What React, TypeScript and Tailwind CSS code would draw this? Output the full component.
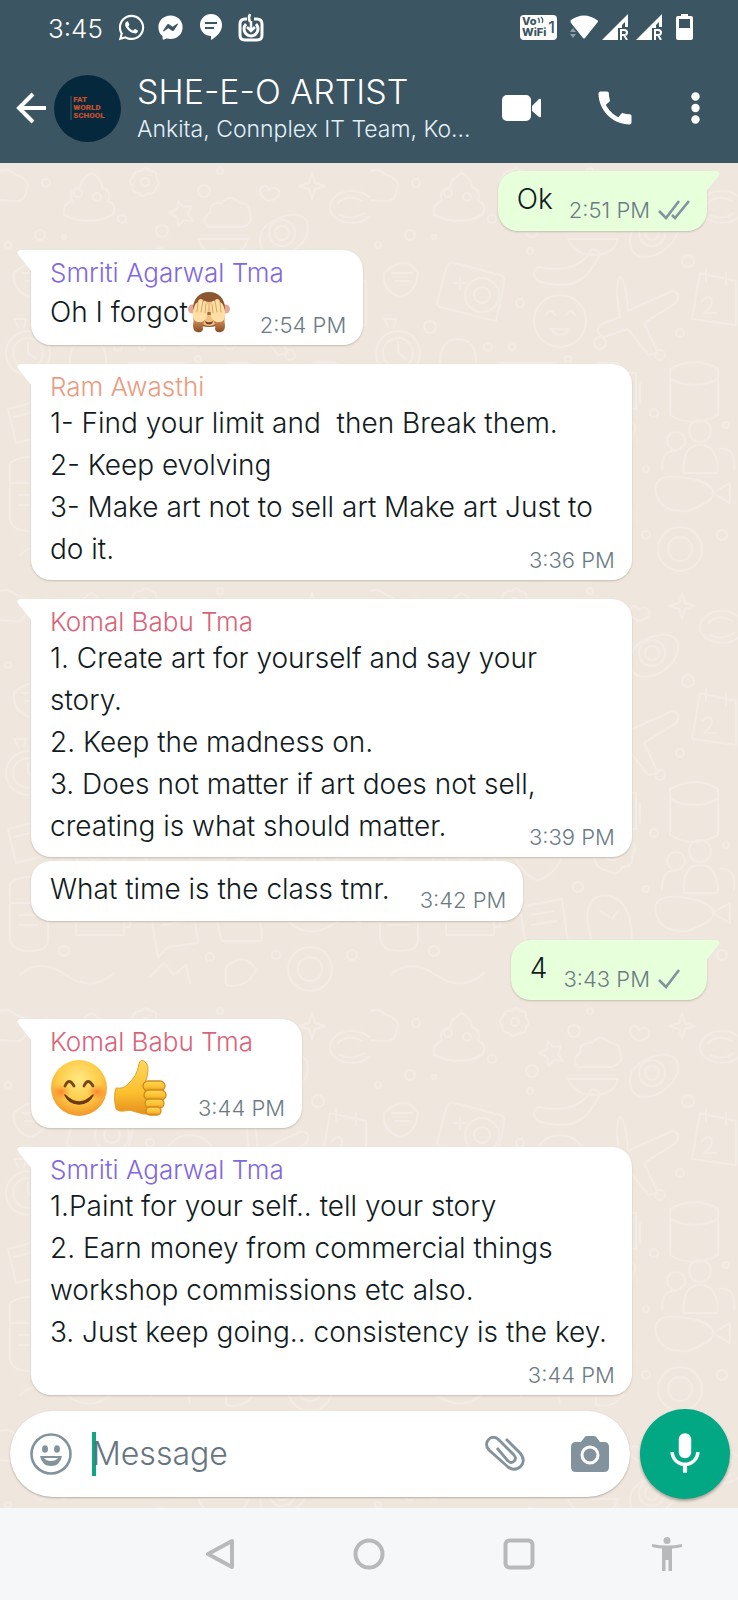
import type { ReactNode } from "react";
import { FaWhatsapp, FaFacebookMessenger } from "react-icons/fa";
import { MdCall, MdMic } from "react-icons/md";

function Doodles() {
  return (
    <svg className="absolute inset-0 h-full w-full" aria-hidden="true">
      <defs>
        <pattern id="doodles" width="370" height="420" patternUnits="userSpaceOnUse">
          <g fill="none" stroke="#f3ebe5" strokeWidth="2" strokeLinecap="round" strokeLinejoin="round">
            <path d="M-8 12q14-10 24 0q16 4 10 18q-2 10-14 8l-26-2" />
            <path d="M64 52q-2-10 8-14q-4-12 8-14q2-10 12-14q10 6 10 14q10 4 6 14q10 4 4 14q-22 12-48 0z" />
            <circle cx="78" cy="30" r="4" /><circle cx="97" cy="34" r="4" />
            <path d="M142 8q4-6 8 0q8 0 6 7q6 5 0 9q0 8-8 6q-5 6-9 0q-8 0-6-7q-6-5 0-9q1-7 9-6z" /><circle cx="145" cy="19" r="4" />
            <path d="M178 38l5 6l8-1l-3 8l5 7l-9-1l-6 6l-1-9l-8-4l8-4z" />
            <path d="M208 64q-8-8 2-14q0-12 12-10q8-10 18 0q10 0 10 10q4 10-8 14z" />
            <path d="M268 38q-12-8-6-14q4-3 7 3q6-5 10 1q2 8-11 10z" />
            <path d="M312 10l3 10l10 3l-10 3l-3 10l-3-10l-10-3l10-3z" />
            <ellipse cx="352" cy="44" rx="22" ry="16" /><path d="M338 40q10-10 24-2M340 52q12 6 24-2" />
            <path d="M198 76h50q-4 16-24 16t-26-16zM262 68c10-16 44-24 46-6s-20 32-34 32s-16-16-12-26z" />
            <circle cx="282" cy="70" r="13" /><circle cx="282" cy="70" r="7" />
            <path d="M14 110q22-20 34 0q-2 20-18 24q-18-6-16-24zM22 110h20M25 118h14" />
            <path d="M84 100l46 12q6 2 4 8l-8 38l-56-14q-4-2-2-8l8-30q2-8 8-6zM90 114v12M84 120h12" /><circle cx="112" cy="132" r="17" /><circle cx="112" cy="132" r="8" />
            <path d="M168 104q40 8 54-18q12 2 4 12q-16 34-58 20q-8-8 0-14z" />
            <circle cx="190" cy="158" r="26" /><path d="M176 152q4-8 9 0M196 152q4-8 9 0M180 166q10 12 20 0z" />
            <path d="M250 114q6 2 8 34l44-20q10 2 4 12l-32 20l14 30l-10 2l-20-26l-24 8q-10-4-4-12l20-8q-6-34 0-40z" />
            <path d="M330 110l36 8v44l-44-6zM336 106v12M356 110v12M332 138q8-8 10 0q0 6-8 12h12" />
            <circle cx="28" cy="190" r="22" /><circle cx="28" cy="190" r="15" /><path d="M28 180v10l8 6M18 164l-4-8h12l-2 8" />
            <path d="M70 206q-2-30 18-30t18 30l6 10H64zM82 216q4 10 12 0" />
            <path d="M128 200h58v32h-58zM136 208h34M136 216h42M136 224h20" />
            <path d="M206 210h16l6-10h20l6 10h12v36h-60zM270 220v20" /><circle cx="238" cy="228" r="12" /><circle cx="238" cy="228" r="5" />
            <path d="M300 206q26-14 48 0v46q-24 14-48 0zM300 216q24 12 48 0" />
            <path d="M8 246l38-10l8 34l-38 10zM14 254l32-8" />
            <circle cx="94" cy="268" r="32" /><circle cx="94" cy="268" r="19" /><circle cx="94" cy="268" r="9" /><path d="M70 236l-8-12h24l2 10" />
            <path d="M144 264q10-22 24-4q16-18 24 4q2 22-24 34q-24-12-24-34z" />
            <path d="M224 270q-4-12 8-14q2-12 14-6q12-4 12 8q12 4 4 14q2 12-10 12q-4 10-14 4q-14-2-14-18z" /><circle cx="242" cy="270" r="7" />
            <circle cx="306" cy="278" r="9" /><circle cx="330" cy="268" r="11" /><path d="M292 306q0-20 14-18M314 310q-2-28 16-28t18 28zM350 286q16-2 14 20" />
            <path d="M10 300v54q0 14 20 14t18-14v-54q-20-12-38 0zM10 320h38M18 332h20M18 342h20" />
            <path d="M76 324h48v28H76zM124 332h6v12h-6" /><path d="M150 324l42-8l6 44l-30 4l-10 10l-2-10zM160 332l24-4M162 342l24-4" />
            <path d="M222 358q-14-42 12-46q28 2 28 46zM230 328l10 6M248 328l-6 8" /><path d="M286 330q-4-18 22-16t34 12t-24 22q-28 2-32-18zM342 330l18-10v20z" />
            <path d="M20 392q20-18 46 0t48-2M150 394l14-14l10 12l12-10l4 18M226 384q18-16 30 2q-8 20-30 16z" /><circle cx="310" cy="386" r="22" /><circle cx="310" cy="386" r="12" />
            <circle cx="46" cy="20" r="4" /><circle cx="122" cy="56" r="4" /><circle cx="162" cy="68" r="6" /><circle cx="204" cy="28" r="6" /><circle cx="220" cy="8" r="3" />
            <circle cx="40" cy="72" r="5" /><circle cx="64" cy="74" r="2" /><circle cx="160" cy="88" r="3" /><circle cx="8" cy="82" r="3" /><circle cx="150" cy="140" r="4" />
            <circle cx="60" cy="164" r="6" /><circle cx="230" cy="180" r="6" /><circle cx="310" cy="170" r="4" /><circle cx="118" cy="184" r="4" /><circle cx="318" cy="98" r="6" />
            <circle cx="142" cy="184" r="3" /><circle cx="198" cy="196" r="3" /><circle cx="290" cy="192" r="5" /><circle cx="60" cy="230" r="4" /><circle cx="142" cy="246" r="5" />
            <circle cx="200" cy="258" r="4" /><circle cx="284" cy="250" r="4" /><circle cx="356" cy="262" r="3" /><circle cx="208" cy="304" r="5" /><circle cx="66" cy="312" r="4" />
            <circle cx="134" cy="308" r="3" /><circle cx="276" cy="306" r="3" /><circle cx="64" cy="368" r="5" /><circle cx="210" cy="374" r="4" /><circle cx="276" cy="372" r="4" /><circle cx="352" cy="372" r="5" />
          </g>
        </pattern>
      </defs>
      <rect width="100%" height="100%" fill="url(#doodles)" />
    </svg>
  );
}

function MonkeyEmoji() {
  return (
    <svg viewBox="0 0 42 42" className="h-[42px] w-[42px]" role="img" aria-label="See-no-evil monkey">
      <defs>
        <linearGradient id="arm" x1="0" y1="0" x2="0" y2="1">
          <stop offset="0" stopColor="#e9a868" /><stop offset="1" stopColor="#8a4a26" />
        </linearGradient>
      </defs>
      <circle cx="4.500" cy="18" r="4.500" fill="#e3a796" /><circle cx="37.500" cy="18" r="4.500" fill="#e3a796" />
      <path d="M21 1C31 1 37 8 37 18Q37 36 21 36T5 18C5 8 11 1 21 1z" fill="#8c5630" />
      <path d="M10 16Q11 8 21 11Q31 8 32 16V28Q28 35 21 35T10 28z" fill="#f0be86" />
      <path d="M17 30q4 2.500 8 0q-.5 3.500-4 3.500t-4-3.500z" fill="#7a3f22" />
      <path d="M18 21h6l-1 3h-4z" fill="#a5653a" />
      <path d="M5 24q1 6 0 11q0 5 4 6q5 1 6-3q-1-4 2-9z" fill="url(#arm)" />
      <path d="M37 24q-1 6 0 11q0 5-4 6q-5 1-6-3q1-4-2-9z" fill="url(#arm)" />
      <path d="M5 26Q4 20 7 14q1-3 3-2.500Q10 8 13 8q2 0 2 2q3-1 3 2q2 0 2 3l-1 11q-3 6-8 5q-5 0-6-5z" fill="#ffdfa6" />
      <path d="M37 26q1-6-2-12q-1-3-3-2.500Q32 8 29 8q-2 0-2 2q-3-1-3 2q-2 0-2 3l1 11q3 6 8 5q5 0 6-5z" fill="#ffdfa6" />
      <path d="M10 12l-1 9M15 10l-2 11M18 13l-1 9M32 12l1 9M27 10l2 11M24 13l1 9" stroke="#dda25f" strokeWidth="1" strokeLinecap="round" fill="none" />
    </svg>
  );
}

function SmileEmoji() {
  return (
    <svg viewBox="0 0 58 58" className="h-[58px] w-[58px]" role="img" aria-label="Smiling face with smiling eyes">
      <defs>
        <radialGradient id="face" cx=".5" cy=".35" r=".65">
          <stop offset="0" stopColor="#ffe983" /><stop offset=".6" stopColor="#fecb46" /><stop offset="1" stopColor="#f2962b" />
        </radialGradient>
        <radialGradient id="blush"><stop offset="0" stopColor="#f9702b" stopOpacity=".75" /><stop offset="1" stopColor="#f9802b" stopOpacity="0" /></radialGradient>
      </defs>
      <circle cx="29" cy="29" r="28" fill="url(#face)" />
      <ellipse cx="11" cy="33" rx="10" ry="8" fill="url(#blush)" /><ellipse cx="47" cy="33" rx="10" ry="8" fill="url(#blush)" />
      <path d="M15 27q4-9 9 0M34 27q4-9 9 0" fill="none" stroke="#78481b" strokeWidth="2.800" strokeLinecap="round" />
      <path d="M15 36q14 14 28 0q-4 9-14 9t-14-9z" fill="#6c3916" stroke="#6c3916" strokeWidth="1.500" strokeLinejoin="round" />
    </svg>
  );
}

function ThumbEmoji() {
  return (
    <svg viewBox="0 0 54 58" className="h-[58px] w-[54px]" role="img" aria-label="Thumbs up">
      <defs>
        <linearGradient id="thumb" x1="0" y1="0" x2="0" y2="1"><stop offset="0" stopColor="#ffd75a" /><stop offset=".6" stopColor="#fbc02f" /><stop offset="1" stopColor="#e58f1c" /></linearGradient>
      </defs>
      <path d="M2 29q7 1 11-3q10-8 12-21q1-5 5-3q6 3 3 16l-3 9l6 28q-6 1-14-2q-6-3-12-1q-5 1-8-2q-3-12 0-21z" fill="url(#thumb)" stroke="#e2a02c" strokeWidth="1" />
      <g fill="url(#thumb)" stroke="#d08a1d" strokeWidth="1.300">
        <rect x="29" y="22" width="22" height="10" rx="5" />
        <rect x="30" y="31" width="22" height="10" rx="5" />
        <rect x="31" y="40" width="19" height="9" rx="4.500" />
        <rect x="32" y="48" width="15" height="8" rx="4" />
      </g>
    </svg>
  );
}

function Ticks({ double }: { double?: boolean }) {
  return (
    <svg viewBox="0 0 32 20" className="ml-2 h-5 w-8" fill="none" stroke="#82939b" strokeWidth="2.600" role="img" aria-label={double ? "Delivered" : "Sent"}>
      <path d="M1 11l7 7L21 1" />
      {double && <path d="M14 15l3 3L31 1" />}
    </svg>
  );
}

type BubbleProps = {
  name?: string;
  color?: string;
  lines: ReactNode[];
  time: string;
  sent?: boolean;
  tail?: boolean;
  wide?: boolean;
  ticks?: ReactNode;
  space?: string;
};

function Bubble({ name, color = "", lines, time, sent, tail = true, wide, ticks, space = "mt-[19px]" }: BubbleProps) {
  const last = lines.length - 1;
  return (
    <article
      className={`relative rounded-[20px] pr-[17px] pl-[19px] shadow-[0_1px_2px_rgba(80,60,40,0.25)] ${space} ${
        sent ? "self-end bg-[#e7ffdb]" : "bg-white"
      } ${wide ? "w-8/9" : "w-fit"} ${name ? "pt-2 pb-[10px]" : "pt-[7px] pb-[11px]"} ${
        tail ? (sent ? "rounded-tr-none" : "rounded-tl-none") : ""
      }`}
    >
      {tail && (
        <svg viewBox="0 0 15 22" aria-hidden="true" className={`absolute top-0 h-[22px] w-[15px] ${sent ? "-right-[13px] -scale-x-100" : "-left-[14px]"}`}>
          <path d="M15 0H3Q-1 1 1.500 5L15 22z" fill={sent ? "#e7ffdb" : "#ffffff"} />
        </svg>
      )}
      {name && <h2 className={`text-[26px] leading-[30px] font-light whitespace-nowrap ${color}`}>{name}</h2>}
      {lines.slice(0, last).map((line, i) => (
        <p key={i} className="whitespace-pre">{line}</p>
      ))}
      <div className={`flex flex-wrap items-end justify-between ${sent ? "gap-x-4" : "gap-x-[30px]"}`}>
        <p className="flex items-center whitespace-pre">{lines[last]}</p>
        <span className="ml-auto flex items-center pt-3 text-[22px] leading-5 whitespace-nowrap text-[#6b7b84]">
          <time>{time}</time>
          {ticks}
        </span>
      </div>
    </article>
  );
}

function Signal() {
  return (
    <svg viewBox="0 0 26 26" className="h-[26px] w-[26px]" aria-hidden="true">
      <path d="M0 26L26 0v13h-3V8l-3 3v3h-4v12z" fill="#fff" />
      <path d="M19 26v-10h3q3 0 3 2.500t-3 2.500h-3M22 21l3 5" fill="none" stroke="#fff" strokeWidth="2" />
    </svg>
  );
}

function StatusBar() {
  return (
    <div className="flex h-[54px] items-center justify-between pr-[45px] pl-12">
      <div className="flex items-center">
        <time className="w-[69px] pt-1 text-[26px] leading-8 font-light">3:45</time>
        <FaWhatsapp className="h-[29px] w-[29px]" />
        <FaFacebookMessenger className="ml-3 h-[25px] w-[25px]" />
        <svg viewBox="0 0 22 26" className="ml-[17px] h-[26px] w-[22px]" aria-hidden="true">
          <path d="M11 0a11 11 0 0 1 11 11c0 6-4 11-11 15v-4A11 11 0 0 1 11 0z" fill="#fff" />
          <path d="M5 9h12M5 14h9" stroke="#3b5563" strokeWidth="2" />
        </svg>
        <svg viewBox="0 0 26 29" className="ml-4 h-[29px] w-[26px]" fill="none" stroke="#fff" aria-hidden="true">
          <path d="M9 6H7Q2 6 2 11v11q0 5 5 5h12q5 0 5-5V11q0-5-5-5h-3" strokeWidth="3" />
          <path d="M8 11a7 7 0 1 0 10 0" strokeWidth="3" />
          <path d="M12 9q-2-4 0-8M13 8v10M9 14l4 4l4-4" strokeWidth="2.500" />
        </svg>
      </div>
      <div className="flex items-center">
        <div className="flex h-[25px] w-[37px] items-center justify-between rounded bg-white px-[2px] text-[#3b5563]" aria-label="Vo WiFi 1">
          <div className="text-[11px] leading-[11px] font-extrabold">
            <div className="flex">Vo<svg viewBox="0 0 8 8" className="h-2 w-2" fill="none" stroke="#3b5563" strokeWidth="1.200"><path d="M1 2q2 2 1 5M4 1q3 3 1 6" /></svg></div>
            <div>WiFi</div>
          </div>
          <span className="text-base leading-4 font-medium">1</span>
        </div>
        <svg viewBox="0 0 28 24" className="ml-[13px] h-6 w-7" aria-hidden="true">
          <path d="M1 5Q14-4 27 5q2 1 0 3L15 23q-1 1-2 0L1 8q-1-2 0-3z" fill="#fff" />
          <path d="M0 17l3-4l3 4zM0 19h6l-3 4z" fill="#8fa0a9" />
        </svg>
        <div className="ml-1 flex gap-2"><Signal /><Signal /></div>
        <svg viewBox="0 0 17 26" className="ml-[14px] h-[26px] w-[17px]" aria-hidden="true">
          <path fillRule="evenodd" d="M5 0h7v2h3q2 0 2 2v20q0 2-2 2H2q-2 0-2-2V4q0-2 2-2h3zM3 5v9h11V5z" fill="#fff" />
        </svg>
      </div>
    </div>
  );
}

function Header() {
  return (
    <header className="bg-[#3b5563] pb-[21px] text-white">
      <StatusBar />
      <div className="flex h-[88px] items-center pt-5 pr-[38px] pl-4">
        <button type="button" aria-label="Back" className="h-8 w-[31px]">
          <svg viewBox="0 0 31 32" fill="none" stroke="#fff" strokeWidth="4"><path d="M30 16H3M17 2L3 16l14 14" /></svg>
        </button>
        <div className="ml-[7px] flex h-[67px] w-[67px] shrink-0 items-center justify-center rounded-full bg-[#06283d]">
          <div className="border-l-2 border-[#24434f] pl-px font-['Roboto'] text-[8px] leading-[8px] font-black text-[#c9512c]">
            FAT<br />WORLD<br />SCHOOL
          </div>
        </div>
        <div className="ml-4 min-w-0 flex-1">
          <h1 className="text-[34px] leading-10 font-light whitespace-nowrap">SHE-E-O ARTIST</h1>
          <p className="pt-px text-[23px] leading-8 font-light whitespace-nowrap text-[#e2f0f8]">Ankita, Connplex IT Team, Ko...</p>
        </div>
        <div className="flex shrink-0 items-center">
          <button type="button" aria-label="Video call">
            <svg viewBox="0 0 39 26" className="h-[26px] w-[39px]" fill="#fff"><rect width="29" height="26" rx="5" /><path d="M30 11l7-7q2-1 2 1v16q0 2-2 1l-7-6z" /></svg>
          </button>
          <button type="button" aria-label="Voice call" className="ml-[52px]"><MdCall className="h-[44px] w-[44px]" /></button>
          <button type="button" aria-label="More options" className="ml-[54px]">
            <svg viewBox="0 0 9 32" className="h-8 w-[9px]" fill="#fff"><circle cx="4.500" cy="4.500" r="4.200" /><circle cx="4.500" cy="16" r="4.200" /><circle cx="4.500" cy="27.500" r="4.200" /></svg>
          </button>
        </div>
      </div>
    </header>
  );
}

function Composer() {
  return (
    <form className="relative mt-[14px] flex items-center gap-[10px] px-2 pb-[9px] pl-[10px]" onSubmit={(e) => e.preventDefault()}>
      <div className="flex h-[86px] min-w-0 flex-1 items-center rounded-full bg-white pr-[21px] pl-5 shadow-[0_1px_2px_rgba(80,60,40,0.35)]">
        <button type="button" aria-label="Emoji" className="shrink-0">
          <svg viewBox="0 0 42 42" className="h-[42px] w-[42px]">
            <circle cx="21" cy="21" r="19.500" fill="none" stroke="#82939d" strokeWidth="2.600" />
            <ellipse cx="15" cy="16" rx="3" ry="3.800" fill="#82939d" /><ellipse cx="27" cy="16" rx="3" ry="3.800" fill="#82939d" />
            <path fillRule="evenodd" d="M10 23h22q-2 10-11 10t-11-10zM14 25q2 3 7 3t7-3z" fill="#82939d" />
          </svg>
        </button>
        <span className="ml-5 h-11 w-1 shrink-0 bg-[#12a583]" />
        <input aria-label="Message" placeholder="Message" className="-ml-1 min-w-0 flex-1 bg-transparent text-[32px] font-light outline-none placeholder:text-[#66757f]" />
        <button type="button" aria-label="Attach" className="shrink-0">
          <svg viewBox="0 0 40 36" className="h-9 w-10" fill="none" stroke="#82939d" strokeWidth="2.800">
            <path d="M21 3l14 14q6 7 1 13q-6 6-13 1L4 14Q-1 8 4 3q5-4 10 1l15 15q3 4 0 6q-2 3-6 0L12 12" />
          </svg>
        </button>
        <button type="button" aria-label="Camera" className="ml-[46px] shrink-0">
          <svg viewBox="0 0 38 36" className="h-9 w-[38px]">
            <path d="M5 6h5l3-4q1-2 3-2h7q2 0 3 2l3 4h4q5 0 5 5v20q0 5-5 5H5q-5 0-5-5V11q0-5 5-5z" fill="#82939d" />
            <circle cx="19" cy="19" r="8" fill="none" stroke="#fff" strokeWidth="3" />
          </svg>
        </button>
      </div>
      <button type="button" aria-label="Record voice message" className="flex h-[90px] w-[90px] shrink-0 items-center justify-center rounded-full bg-[#02a884] text-white shadow-[0_2px_3px_rgba(60,50,40,0.4)]">
        <MdMic className="h-[50px] w-[50px]" />
      </button>
    </form>
  );
}

function NavBar() {
  return (
    <nav className="flex h-[92px] items-center bg-[#f6f7f9] pr-14 pl-[206px]" aria-label="System">
      <div className="flex flex-1 items-center justify-between">
        <button type="button" aria-label="Back"><svg viewBox="0 0 30 32" className="h-8 w-[30px]" fill="none" stroke="#b7b9ba" strokeWidth="4" strokeLinejoin="round"><path d="M26 3v26L2 16z" /></svg></button>
        <button type="button" aria-label="Home"><svg viewBox="0 0 32 32" className="h-8 w-8" fill="none" stroke="#b7b9ba" strokeWidth="4"><circle cx="16" cy="16" r="13.500" /></svg></button>
        <button type="button" aria-label="Recent apps"><svg viewBox="0 0 32 32" className="h-8 w-8" fill="none" stroke="#b7b9ba" strokeWidth="4"><rect x="2.500" y="2.500" width="27" height="27" rx="4" /></svg></button>
        <button type="button" aria-label="Accessibility">
          <svg viewBox="0 0 30 34" className="h-[34px] w-[30px]" fill="#b7b9ba"><circle cx="15" cy="3.500" r="3.500" /><path d="M0 7q15 3 30 0v3q-5 1-10 1.500V34h-3.500V23h-3v11H10V11.500Q5 11 0 10z" /></svg>
        </button>
      </div>
    </nav>
  );
}

export default function App() {
  return (
    <div className="flex min-h-screen flex-col bg-[#efe7de] font-['Inter','Liberation_Sans',sans-serif] font-light">
      <Header />
      <main className="relative flex flex-1 flex-col overflow-hidden">
        <Doodles />
        <section className="relative flex flex-1 flex-col px-[31px] text-[28px] leading-[42px] text-[#111b21]" aria-label="Messages">
          <Bubble sent lines={["Ok"]} time="2:51 PM" ticks={<Ticks double />} space="mt-2" />
          <Bubble name="Smriti Agarwal Tma" color="text-[#8068e0]" lines={[<span key="m" className="flex h-[47px] items-center">Oh I forgot<MonkeyEmoji /></span>]} time="2:54 PM" />
          <Bubble wide name="Ram Awasthi" color="text-[#ec9b80]" lines={["1- Find your limit and  then Break them.", "2- Keep evolving", "3- Make art not to sell art Make art Just to", "do it."]} time="3:36 PM" />
          <Bubble wide name="Komal Babu Tma" color="text-[#d8647a]" lines={["1. Create art for yourself and say your", "story.", "2. Keep the madness on.", "3. Does not matter if art does not sell,", "creating is what should matter."]} time="3:39 PM" />
          <Bubble tail={false} lines={["What time is the class tmr."]} time="3:42 PM" space="mt-1" />
          <Bubble sent lines={["4"]} time="3:43 PM" ticks={<Ticks />} />
          <Bubble name="Komal Babu Tma" color="text-[#d8647a]" lines={[<span key="e" className="flex h-[61px] items-center gap-[6px]"><SmileEmoji /><ThumbEmoji /></span>]} time="3:44 PM" />
          <Bubble wide name="Smriti Agarwal Tma" color="text-[#8068e0]" lines={["1.Paint for your self.. tell your story", "2. Earn money from commercial things", "workshop commissions etc also.", "3. Just keep going.. consistency is the key."]} time="3:44 PM" />
        </section>
        <Composer />
      </main>
      <NavBar />
    </div>
  );
}
